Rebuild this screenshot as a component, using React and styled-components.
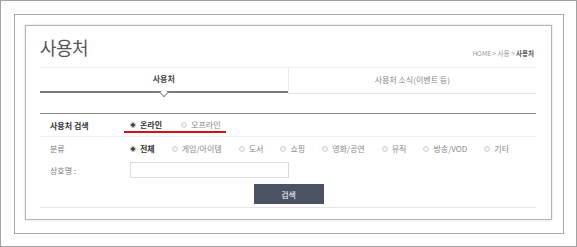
import React from 'react';
import styled, { createGlobalStyle } from 'styled-components';

const GlobalStyle = createGlobalStyle`
  * { box-sizing: border-box; }
  body {
    margin: 0;
    background: #fff;
    font-family: "Noto Sans CJK KR", "Noto Sans", sans-serif;
  }
`;

const CATEGORIES = ['전체', '게임/아이템', '도서', '쇼핑', '영화/공연', '뮤직', '방송/VOD', '기타'];

const App = () => {
  return (
    <>
      <GlobalStyle />
      <OuterFrame>
        <InnerFrame>
          <Card>
            <Header>
              <Title>사용처</Title>
              <Breadcrumb>
                HOME &gt; 사용 &gt; <b>사용처</b>
              </Breadcrumb>
            </Header>
            <Tabs>
              <Tab active>사용처</Tab>
              <Tab>사용처 소식(이벤트 등)</Tab>
            </Tabs>
            <Form>
              <Row bordered>
                <Label>사용처 검색</Label>
                <Highlight>
                  <Radio checked>온라인</Radio>
                  <Radio>오프라인</Radio>
                </Highlight>
              </Row>
              <Row>
                <Label light>분류</Label>
                <RadioGroup>
                  {CATEGORIES.map((name, index) => (
                    <Radio key={`${name}_${index}`} checked={index === 0}>
                      {name}
                    </Radio>
                  ))}
                </RadioGroup>
              </Row>
              <Row short>
                <Label light>상호명 :</Label>
                <NameInput />
              </Row>
              <ButtonRow>
                <SearchButton type="button">검색</SearchButton>
              </ButtonRow>
            </Form>
          </Card>
        </InnerFrame>
      </OuterFrame>
    </>
  );
};

const Radio = ({ checked, children }) => (
  <RadioItem checked={checked}>
    <RadioDot checked={checked} />
    {children}
  </RadioItem>
);

const OuterFrame = styled.div`
  width: 577px;
  height: 247px;
  border: 1px solid #a2a2a2;
  padding: 13px 12px 12px 13px;
`;
const InnerFrame = styled.div`
  height: 100%;
  border: 1px solid #a8a8a8;
  padding: 10px 11px 13px 10px;
`;
const Card = styled.div`
  height: 100%;
  border: 1px solid #b4b4b4;
  box-shadow: 0 0 2px rgba(0, 0, 0, 0.18);
  padding: 10px 15px 0 14px;
  display: flex;
  flex-direction: column;
`;
const Header = styled.div`
  display: flex;
  justify-content: space-between;
  align-items: flex-end;
  height: 21px;
  margin-bottom: 10px;
`;
const Title = styled.h1`
  margin: 0;
  font-size: 18px;
  line-height: 20px;
  font-weight: 400;
  color: #555;
  letter-spacing: -0.5px;
`;
const Breadcrumb = styled.div`
  font-size: 6.5px;
  line-height: 10px;
  color: #999;
  padding-right: 2px;
  margin-bottom: -1px;
  b {
    color: #555;
    font-weight: 700;
  }
`;
const Tabs = styled.div`
  display: flex;
  align-items: flex-start;
  border-top: 1px solid #efefef;
  height: 28px;
`;
const Tab = styled.div`
  position: relative;
  flex: 1;
  height: ${({ active }) => (active ? '25px' : '26px')};
  display: flex;
  align-items: center;
  justify-content: center;
  padding-bottom: 2px;
  font-size: 8px;
  color: ${({ active }) => (active ? '#444' : '#888')};
  font-weight: ${({ active }) => (active ? 700 : 400)};
  border-bottom: ${({ active }) => (active ? '2px solid #7a7a7a' : '1px solid #e2e2e2')};
  border-left: ${({ active }) => (active ? 'none' : '1px solid #eaeaea')};
  &::after {
    content: '';
    display: ${({ active }) => (active ? 'block' : 'none')};
    position: absolute;
    left: 50%;
    bottom: -5px;
    width: 5px;
    height: 5px;
    margin-left: -3px;
    border-right: 1px solid #888;
    border-bottom: 1px solid #888;
    background: #fff;
    transform: rotate(45deg);
  }
`;
const Form = styled.div`
  margin-top: 18px;
  border-top: 1px solid #8c8c8c;
  border-bottom: 1px solid #e6e6e6;
  padding-bottom: 3px;
`;
const Row = styled.div`
  display: flex;
  align-items: center;
  height: ${({ short }) => (short ? '20px' : '23px')};
  border-bottom: ${({ bordered }) => (bordered ? '1px solid #efefef' : 'none')};
  padding-left: 10px;
`;
const Label = styled.div`
  width: 80px;
  flex-shrink: 0;
  font-size: 8px;
  font-weight: ${({ light }) => (light ? 400 : 700)};
  color: ${({ light }) => (light ? '#777' : '#333')};
`;
const Highlight = styled.div`
  display: flex;
  gap: 19px;
  margin-left: -6px;
  margin-top: 2px;
  padding: 0 5px 1px 6px;
  border-bottom: 2px solid #d0111b;
`;
const RadioGroup = styled.div`
  display: flex;
  gap: 17px;
`;
const RadioItem = styled.span`
  display: inline-flex;
  align-items: center;
  font-size: 8px;
  color: ${({ checked }) => (checked ? '#333' : '#888')};
  font-weight: ${({ checked }) => (checked ? 700 : 400)};
  white-space: nowrap;
`;
const RadioDot = styled.i`
  width: 6px;
  height: 6px;
  margin-right: 4px;
  border-radius: 50%;
  border: 1px solid ${({ checked }) => (checked ? '#bbb' : '#d2d2d2')};
  background: ${({ checked }) => (checked ? 'radial-gradient(circle, #444 0 1.6px, #fff 1.8px)' : '#f4f4f4')};
`;
const NameInput = styled.input`
  width: 159px;
  height: 16px;
  border: 1px solid #dcdcdc;
  margin: 0;
  padding: 0 4px;
`;
const ButtonRow = styled.div`
  display: flex;
  justify-content: center;
  padding: 4px 0 0;
`;
const SearchButton = styled.button`
  width: 70px;
  height: 20px;
  border: none;
  background: #4b5263;
  color: #fff;
  font-family: inherit;
  font-size: 8px;
  margin-left: 1px;
  cursor: pointer;
`;

export default App;
